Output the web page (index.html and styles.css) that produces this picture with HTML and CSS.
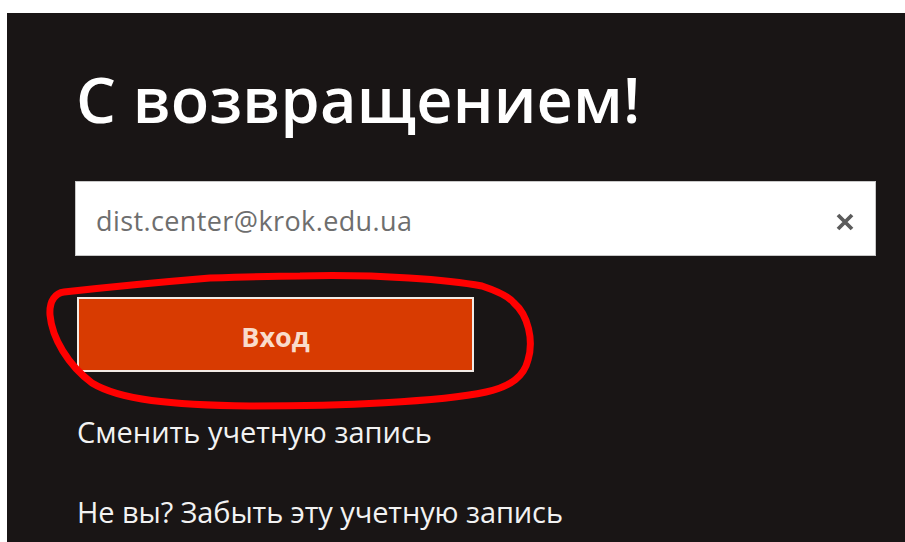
FILE: index.html
```html
<!DOCTYPE html>
<html lang="ru">
<head>
<meta charset="utf-8">
<title>С возвращением!</title>
<link rel="stylesheet" href="styles.css">
</head>
<body>
<div class="panel">
  <h1 class="title">С возвращением!</h1>
  <div class="account">
    <span class="account-email">dist.center@krok.edu.ua</span>
    <span class="account-clear">
      <svg width="22" height="22" viewBox="0 0 22 22"><path d="M4 4 L18 18 M18 4 L4 18" stroke="#5b5b5b" stroke-width="3.8" stroke-linecap="butt"/></svg>
    </span>
  </div>
  <button class="signin">Вход</button>
  <a class="link switch">Сменить учетную запись</a>
  <a class="link forget">Не вы? Забыть эту учетную запись</a>
  <svg class="mark" width="905" height="542" viewBox="0 0 905 542">
    <path d="M300 276 C 380 274 450 280 482 286 C 500 292 510 298 514 303 C 528 315 534 340 528 360 C 524 376 512 386 486 392 C 440 402 340 406 250 406 C 170 405 120 400 92 383 C 68 365 52 338 50 315 C 49 300 56 293 64 292 C 100 288 150 283 210 278 C 240 277 270 276 300 276 Z" fill="none" stroke="#ff0000" stroke-width="7" stroke-linejoin="round"/>
  </svg>
</div>
</body>
</html>
```
FILE: styles.css
```css
html, body {
  margin: 0;
  padding: 0;
  background: #ffffff;
}

body {
  width: 905px;
  height: 542px;
  overflow: hidden;
}

.panel {
  position: relative;
  margin: 13px 0 0 7px;
  height: 529px;
  background: #191515;
  padding: 0 29px 0 68px;
  box-sizing: border-box;
  display: flex;
  flex-direction: column;
  align-items: flex-start;
  font-family: "Open Sans", "Noto Sans", sans-serif;
}

.title {
  margin: 46px 0 0 1px;
  font-size: 63px;
  line-height: 80px;
  font-weight: 600;
  color: #ffffff;
  letter-spacing: 0.2px;
}

.account {
  margin-top: 42px;
  align-self: stretch;
  height: 75px;
  background: #ffffff;
  border: 1px solid #c8c8c8;
  box-sizing: border-box;
  display: flex;
  align-items: center;
  justify-content: space-between;
  padding: 0 19px 0 20px;
}

.account-email {
  font-size: 27px;
  color: #6e6e6e;
  margin-top: 3px;
  letter-spacing: 0.4px;
}

.account-clear {
  display: flex;
  margin-top: 6px;
}

.signin {
  display: block;
  margin: 41px 0 0 2px;
  width: 397px;
  height: 75px;
  background: #d83b01;
  border: 2px solid #f2ebe6;
  color: #f9dccb;
  font-family: "Open Sans", "Noto Sans", sans-serif;
  font-size: 27px;
  font-weight: 700;
  padding: 4px 0 0;
}

.link {
  margin-left: 2px;
  color: #f2f2f2;
  font-size: 29px;
  line-height: 40px;
}

.switch {
  margin-top: 40px;
}

.forget {
  margin-top: 40px;
  letter-spacing: -0.1px;
}

.mark {
  position: absolute;
  left: -7px;
  top: -13px;
  pointer-events: none;
}
```
